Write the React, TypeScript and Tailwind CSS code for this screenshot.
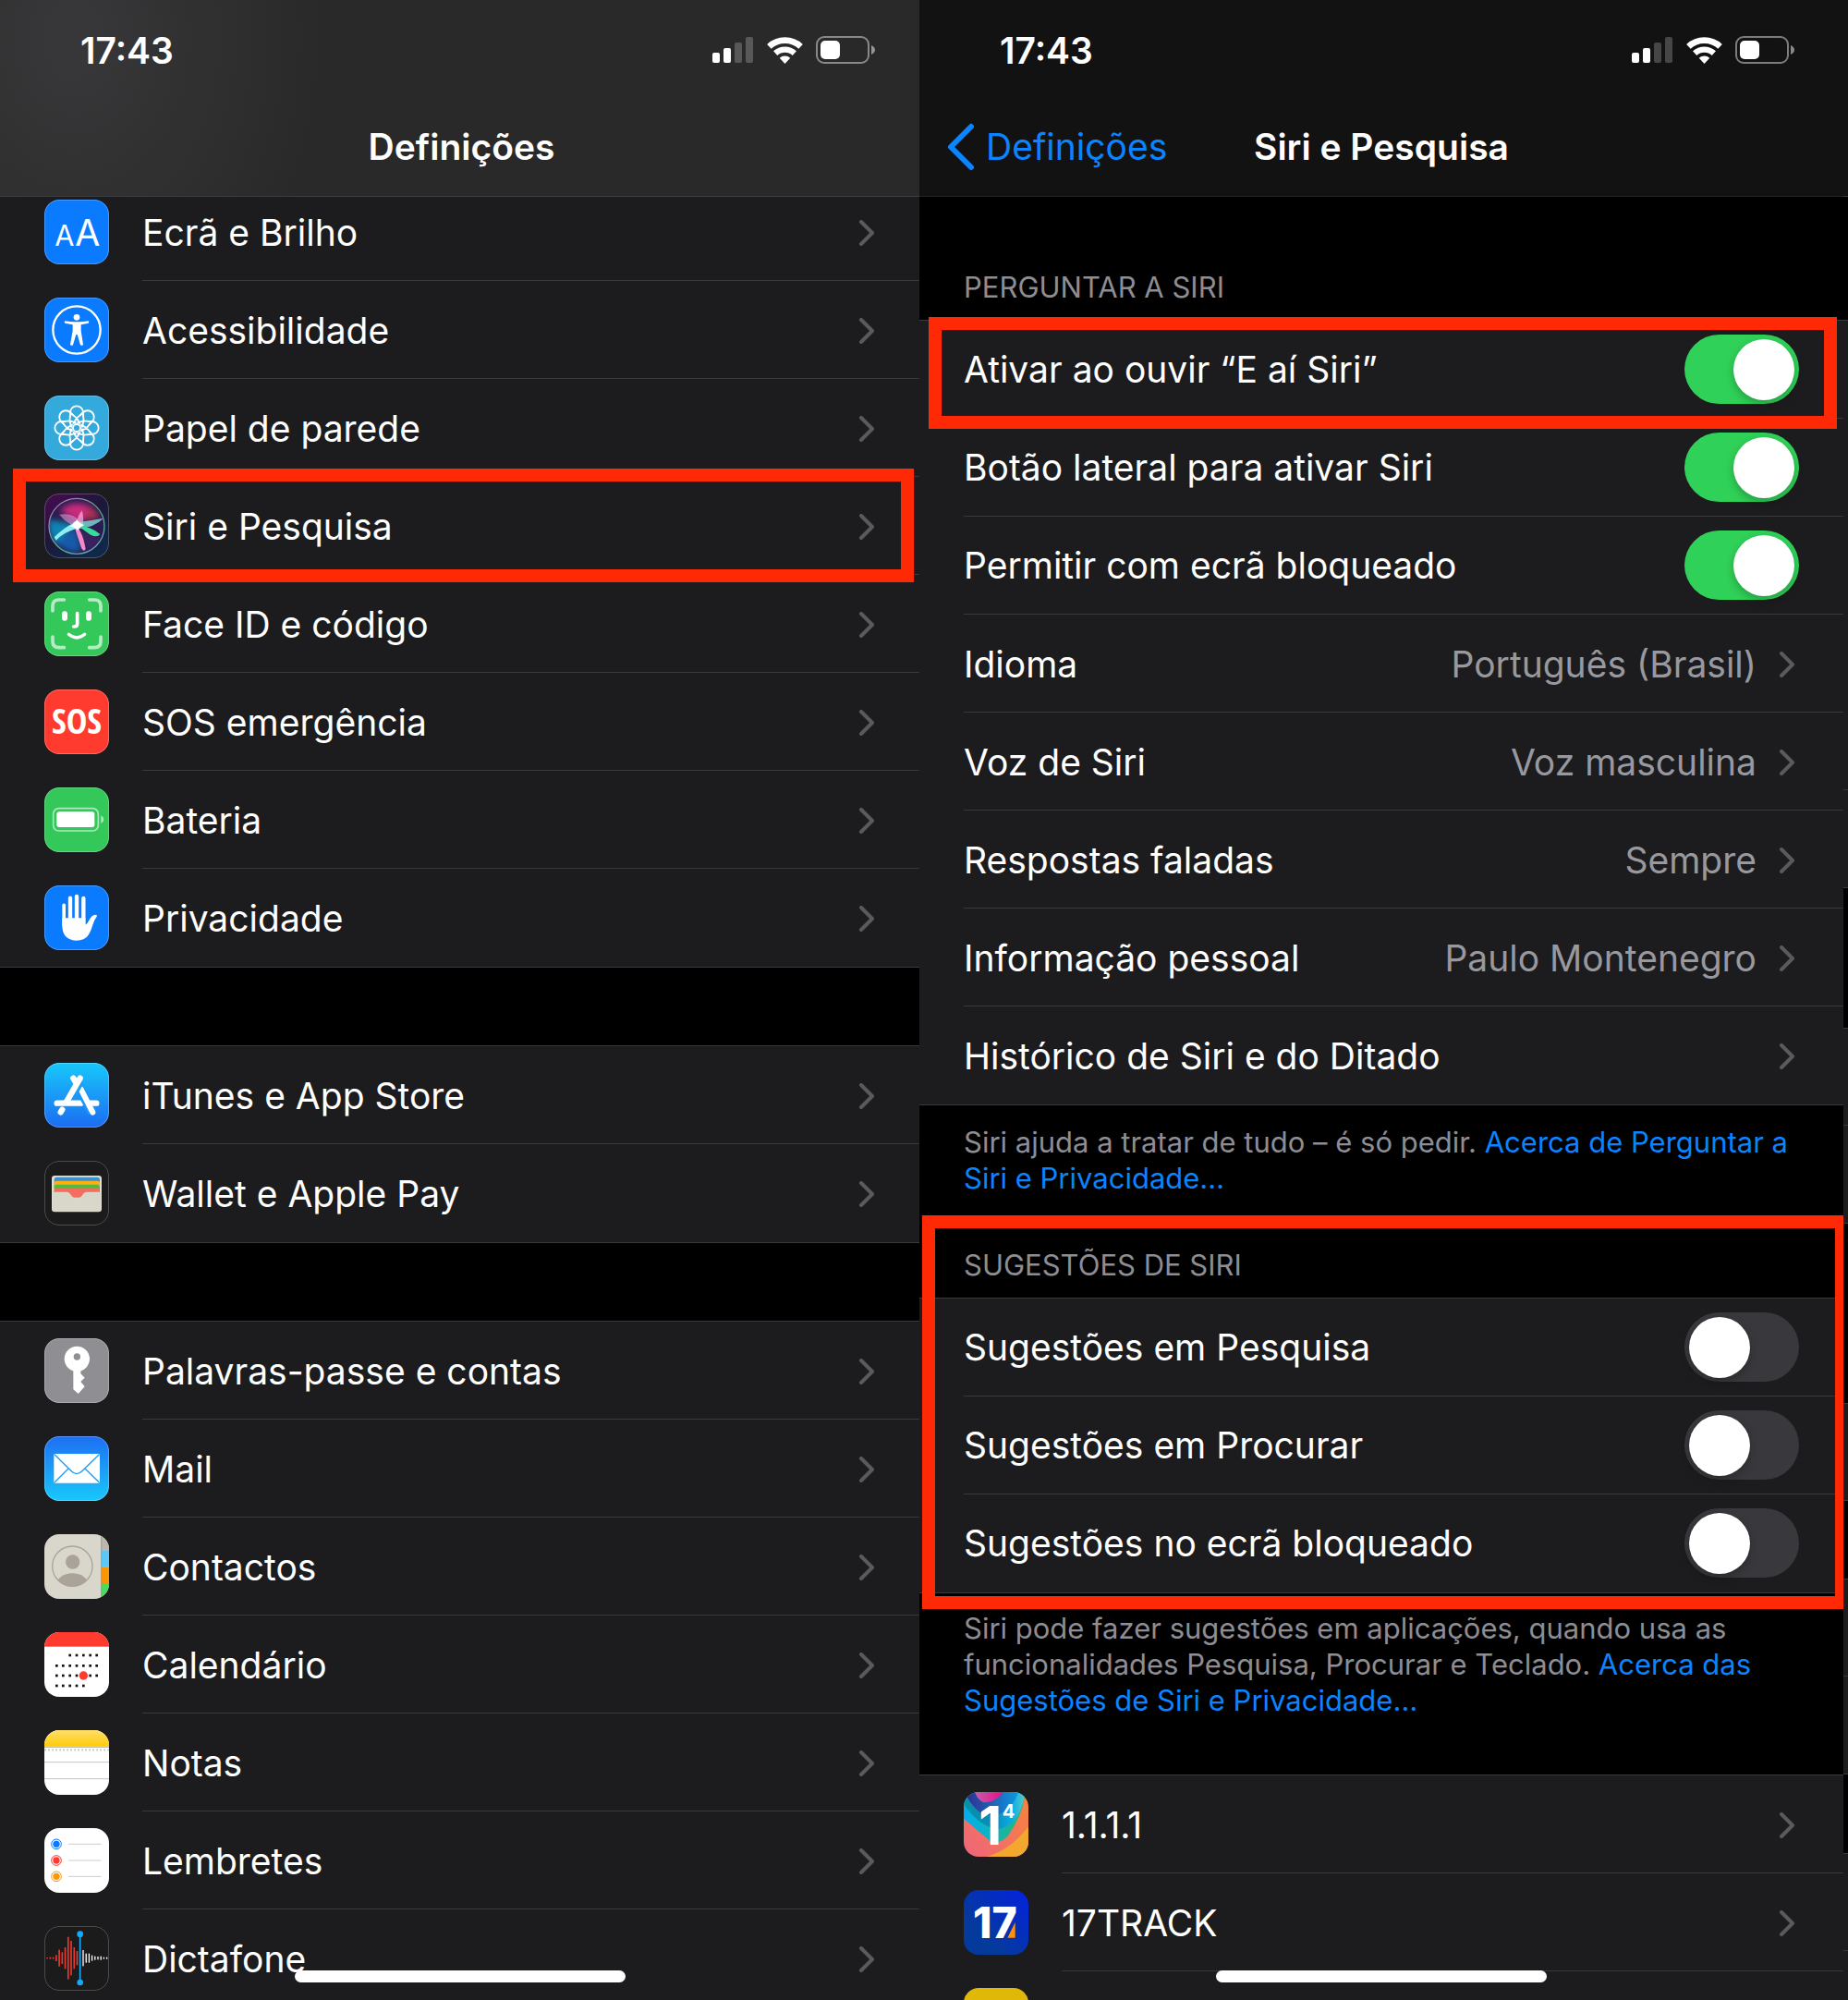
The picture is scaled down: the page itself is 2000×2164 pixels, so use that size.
import type { ReactNode } from "react";
import { useState } from "react";

type LinkItem = { label: string; icon?: ReactNode; value?: string; marked?: boolean }

const inter = { fontFamily: "Inter, sans-serif" }

/* ---------- app icons, drawn on a 210 x 210 grid ---------- */

const Tile = ({ bg, edge = 0.3, children }: { bg: string; edge?: number; children?: ReactNode }) => (
    <svg viewBox="0 0 210 210" className="size-[70px] shrink-0 overflow-hidden rounded-[16px]" aria-hidden="true">
        <rect width="210" height="210" fill={bg} />
        {children}
        <rect x="1" y="1" width="208" height="208" rx="47" fill="none" stroke="#fff" strokeOpacity={edge} strokeWidth="3" />
    </svg>
)

const DisplayIcon = () => (
    <Tile bg="#0a7aff">
        <text x="34" y="149" fontSize="92" fontWeight="400" fill="#fff" style={inter}>A</text>
        <text x="99" y="149" fontSize="119" fontWeight="400" fill="#fff" style={inter}>A</text>
    </Tile>
)

const AccessibilityIcon = () => (
    <Tile bg="#0a7aff">
        <circle cx="105" cy="105" r="77" fill="none" stroke="#fff" strokeWidth="7" />
        <circle cx="105" cy="64" r="10" fill="#fff" />
        <path d="M67 76 Q86 79 96 79 H114 Q124 79 143 76 Q147 79 143 83 L119 88 V108 L126 152 Q123 158 117 154 L107 120 H103 L93 154 Q87 158 84 152 L92 108 V88 L67 83 Q63 79 67 76 Z" fill="#fff" />
    </Tile>
)

const WallpaperIcon = () => (
    <Tile bg="#34aadc">
        <g fill="none" stroke="#fff" strokeWidth="5.5" strokeLinejoin="round">
            {[0, 45, 90, 135, 180, 225, 270, 315].map((a) => (
                <path key={a} transform={`rotate(${a} 105 105)`} d="M105 73 L94 92 M105 73 L116 92 M105 73 L84 55 A21 21 0 1 1 126 55 L105 73 M84 55 V70 M126 55 V70" />
            ))}
            <circle cx="105" cy="105" r="12" />
        </g>
    </Tile>
)

const SiriIcon = () => (
    <Tile bg="url(#siriBg)" edge={0.25}>
        <defs>
            <linearGradient id="siriBg" x1="0" y1="0" x2="0.7" y2="1">
                <stop offset="0" stopColor="#4b0a55" />
                <stop offset="0.5" stopColor="#1d1738" />
                <stop offset="1" stopColor="#10294a" />
            </linearGradient>
            <linearGradient id="siriRing" x1="0" y1="0" x2="1" y2="1">
                <stop offset="0" stopColor="#d88ad0" />
                <stop offset="0.6" stopColor="#5fd39a" />
                <stop offset="1" stopColor="#8fb8e8" />
            </linearGradient>
            <clipPath id="siriClip"><circle cx="105" cy="106" r="88" /></clipPath>
            <filter id="siriSoft"><feGaussianBlur stdDeviation="9" /></filter>
            <filter id="siriGlow"><feGaussianBlur stdDeviation="2" /></filter>
        </defs>
        <g clipPath="url(#siriClip)">
            <rect width="210" height="210" fill="#2a1c52" />
            <g filter="url(#siriSoft)">
                <path d="M50 55 Q90 18 145 40 Q175 65 172 82 L105 90 Z" fill="#c92a7c" />
                <path d="M120 88 L176 82 Q180 60 150 42 Z" fill="#a8304f" />
                <path d="M15 85 L100 100 L40 165 Q10 140 15 85 Z" fill="#0a86b5" />
                <path d="M40 160 L105 110 L118 185 Q80 200 40 160 Z" fill="#135cab" />
                <path d="M115 115 L190 145 Q170 190 135 190 Z" fill="#3b235f" />
            </g>
            <g filter="url(#siriGlow)">
                <path d="M48 68 Q105 58 130 112 Q80 108 48 68 Z" fill="#e7a3dc" fillOpacity="0.55" />
                <path d="M102 106 Q108 70 122 55 Q130 80 124 106 Z" fill="#f7a9dc" fillOpacity="0.75" />
                <path d="M32 142 Q62 112 98 94 Q112 108 104 114 Q62 126 38 152 Z" fill="#8feef2" />
                <path d="M104 94 Q150 88 192 80 Q162 110 112 114 Z" fill="#7fe9dc" fillOpacity="0.75" />
                <path d="M108 104 Q152 106 181 132 Q172 144 150 134 Z" fill="#35dc9a" />
                <path d="M97 106 Q122 112 134 180 Q128 192 120 176 Z" fill="#f48ac4" />
                <path d="M84 106 Q100 98 105 84 Q111 98 130 102 Q114 108 110 120 Q100 110 84 106 Z" fill="#fff" />
                <circle cx="105" cy="102" r="12" fill="#fff" />
            </g>
        </g>
        <circle cx="105" cy="106" r="90" fill="none" stroke="url(#siriRing)" strokeWidth="4" strokeOpacity="0.8" />
    </Tile>
)

const FaceIdIcon = () => (
    <Tile bg="#34c759">
        <g fill="none" stroke="#fff" strokeLinecap="round">
            <path d="M27 63 V47 Q27 27 47 27 H64 M146 27 H163 Q183 27 183 47 V63 M183 147 V162 Q183 182 163 182 H146 M64 182 H47 Q27 182 27 162 V147" strokeWidth="11" strokeOpacity="0.65" />
            <path d="M107 71 V104 Q107 114 97 114 H95" strokeWidth="11" />
            <path d="M79 139 Q105 161 131 139" strokeWidth="10" />
        </g>
        <rect x="57" y="64" width="18" height="31" rx="9" fill="#fff" />
        <rect x="135" y="64" width="18" height="31" rx="9" fill="#fff" />
    </Tile>
)

const SosIcon = () => (
    <Tile bg="#ff3b30">
        <text x="105" y="144" textAnchor="middle" fontSize="114" fontWeight="700" fill="#fff" style={{ fontFamily: "'Liberation Sans Narrow', 'Open Sans Condensed', Roboto, sans-serif" }}>SOS</text>
    </Tile>
)

const BatteryIcon = () => (
    <Tile bg="#34c759">
        <rect x="29" y="68" width="146" height="73" rx="18" fill="none" stroke="#fff" strokeOpacity="0.6" strokeWidth="5" />
        <rect x="40" y="79" width="123" height="50" rx="8" fill="#fff" />
        <path d="M184 91 Q193 96 193 104 Q193 112 184 117 Z" fill="#fff" fillOpacity="0.6" />
    </Tile>
)

const HandIcon = () => (
    <Tile bg="#0a7aff">
        <g stroke="#fff" strokeWidth="13" strokeLinecap="round">
            <path d="M63.500 64 V130" strokeWidth="11" />
            <path d="M84 41 V130" />
            <path d="M105 36 V130" />
            <path d="M127 42 V130" />
        </g>
        <path d="M58 106 H133 V128 Q140 124 145 113 Q154 95 166 95 Q173 96 170 101 Q162 112 157 128 Q150 152 140 165 Q128 179 103 179 Q58 177 58 130 Z" fill="#fff" />
    </Tile>
)

const AppStoreIcon = () => (
    <Tile bg="url(#storeBg)">
        <defs>
            <linearGradient id="storeBg" x1="0" y1="0" x2="0" y2="1">
                <stop offset="0" stopColor="#18c8fb" />
                <stop offset="1" stopColor="#1c6cf2" />
            </linearGradient>
        </defs>
        <g stroke="#fff" strokeWidth="19" strokeLinecap="round">
            <path d="M41 131 H118" />
            <path d="M116 84 L156 161" stroke="#1c96f7" strokeWidth="31" strokeLinecap="butt" />
            <path d="M119 86 L157 161" strokeWidth="18" />
            <path d="M116 58 L98 90" stroke="#1c9ff8" strokeWidth="29" strokeLinecap="butt" />
            <path d="M94 50 L104 66" />
            <path d="M116 50 L71 128" />
            <path d="M150 131 H169" />
            <path d="M58 152 L53 160" />
        </g>
    </Tile>
)

const WalletIcon = () => (
    <Tile bg="#1b1b1b" edge={0.25}>
        <rect x="24" y="48" width="162" height="118" rx="10" fill="#e2dfd4" />
        <rect x="32" y="53" width="148" height="40" rx="8" fill="#3d93c9" />
        <rect x="32" y="65" width="148" height="40" rx="8" fill="#fbb016" />
        <rect x="32" y="77" width="148" height="40" rx="8" fill="#57b93b" />
        <rect x="32" y="89" width="148" height="30" rx="8" fill="#f36e5e" />
        <path d="M27 101 H74 Q82 102 87 112 Q94 122 105 122 Q116 122 123 112 Q128 102 136 101 H183 V155 Q183 163 175 163 H35 Q27 163 27 155 Z" fill="#d9d6ca" />
    </Tile>
)

const KeyIcon = () => (
    <Tile bg="#8e8e93">
        <path d="M94 98 H118 V115 L131 128 L118 141 L131 157 L110 180 L94 166 Z" fill="#fff" />
        <circle cx="106" cy="67" r="41" fill="#fff" />
        <circle cx="106" cy="60" r="11" fill="#8e8e93" />
    </Tile>
)

const MailIcon = () => (
    <Tile bg="url(#mailBg)">
        <defs>
            <linearGradient id="mailBg" x1="0" y1="0" x2="0" y2="1">
                <stop offset="0" stopColor="#1e6ff2" />
                <stop offset="1" stopColor="#19c8fb" />
            </linearGradient>
        </defs>
        <rect x="31" y="57" width="149" height="95" rx="4" fill="#fff" />
        <path d="M33 59 L86 112 Q105 132 124 112 L178 59 M33 150 L78 105 M178 150 L132 105" fill="none" stroke="#1e9bf8" strokeWidth="4" />
    </Tile>
)

const ContactsIcon = () => (
    <Tile bg="#d9d6cb" edge={0}>
        <rect x="184" width="26" height="52" fill="#b9b7ae" />
        <rect x="184" y="52" width="26" height="54" fill="#5ac8fa" />
        <rect x="184" y="106" width="26" height="53" fill="#ff9500" />
        <rect x="184" y="159" width="26" height="51" fill="#4cd964" />
        <path d="M185 0 V210" stroke="#8f8d85" strokeOpacity="0.6" strokeWidth="3" />
        <clipPath id="person"><circle cx="91" cy="104" r="65" /></clipPath>
        <circle cx="91" cy="104" r="65" fill="none" stroke="#aaa398" strokeWidth="4" />
        <circle cx="92" cy="90" r="23" fill="#aaa398" />
        <ellipse cx="91" cy="164" rx="52" ry="37" fill="#aaa398" clipPath="url(#person)" />
    </Tile>
)

const calendarCols = [40, 61, 83, 105, 127, 149, 170]
const calendarRows = [
    { y: 75, from: 2, to: 7 },
    { y: 109, from: 0, to: 7 },
    { y: 141, from: 0, to: 7 },
    { y: 174, from: 0, to: 5 },
]

const CalendarIcon = () => (
    <Tile bg="#fff" edge={0}>
        <rect width="210" height="47" fill="#ff3b30" />
        {calendarRows.map((row) => calendarCols.slice(row.from, row.to).map((x) => (
            <rect key={`${x}-${row.y}`} x={x - 4} y={row.y - 4} width="8" height="8" fill="#111" />
        )))}
        <circle cx="127" cy="141" r="14" fill="#ff3b30" />
    </Tile>
)

const NotesIcon = () => (
    <Tile bg="#fff" edge={0}>
        <defs>
            <linearGradient id="notesTop" x1="0" y1="0" x2="0" y2="1">
                <stop offset="0" stopColor="#ffdf6b" />
                <stop offset="1" stopColor="#fecb09" />
            </linearGradient>
        </defs>
        <rect width="210" height="53" fill="url(#notesTop)" />
        <path d="M0 55 H210" stroke="#bdb9ad" strokeWidth="4" />
        <path d="M1 64 H210" stroke="#bbb" strokeWidth="5" strokeDasharray="5 7" />
        <path d="M0 104 H210 M0 158 H210" stroke="#c4c4c6" strokeWidth="3" />
    </Tile>
)

const RemindersIcon = () => (
    <Tile bg="#fff" edge={0}>
        {[{ y: 52, c: "#0a7aff" }, { y: 105, c: "#ff3b30" }, { y: 157, c: "#ff9500" }].map(({ y, c }) => (
            <g key={y}>
                <circle cx="39" cy={y} r="16" fill="none" stroke={c} strokeWidth="3" />
                <circle cx="39" cy={y} r="11" fill={c} />
                <path d={`M78 ${y} H185`} stroke="#cdcdd0" strokeWidth="3" />
            </g>
        ))}
    </Tile>
)

const redBars = [2, 3, 3, 10, 27, 19, 35, 69, 56, 35, 23]
const whiteBars = [26, 15, 15, 9, 6, 5, 6, 3, 3]

const VoiceIcon = () => (
    <Tile bg="#1b1b1c" edge={0.25}>
        {redBars.map((h, i) => <rect key={i} x={7 + i * 9.7} y={104 - h} width="5" height={h * 2} fill="#e8392f" />)}
        {whiteBars.map((h, i) => <rect key={i} x={124 + i * 9.6} y={104 - h} width="4" height={h * 2} fill="#fff" />)}
        <path d="M116 26 V183" stroke="#18a8f8" strokeWidth="5" />
        <circle cx="116" cy="26" r="10" fill="#18a8f8" />
        <circle cx="116" cy="183" r="10" fill="#18a8f8" />
    </Tile>
)

const OneIcon = () => (
    <Tile bg="url(#oneBase)" edge={0}>
        <defs>
            <linearGradient id="oneBase" x1="0" y1="1" x2="1" y2="0">
                <stop offset="0" stopColor="#f0647c" />
                <stop offset="1" stopColor="#f6863a" />
            </linearGradient>
            <linearGradient id="oneGreen" x1="0" y1="0" x2="1" y2="0">
                <stop offset="0" stopColor="#00aeef" />
                <stop offset="0.45" stopColor="#10b4bb" />
                <stop offset="1" stopColor="#2bb673" />
            </linearGradient>
            <linearGradient id="oneBlue" x1="0" y1="0" x2="1" y2="0">
                <stop offset="0" stopColor="#0590a8" />
                <stop offset="0.5" stopColor="#0b8bb5" />
                <stop offset="0.8" stopColor="#06b0e8" />
                <stop offset="1" stopColor="#5cc4c4" />
            </linearGradient>
            <linearGradient id="oneNavy" x1="0" y1="0" x2="1" y2="0">
                <stop offset="0" stopColor="#33288a" />
                <stop offset="1" stopColor="#0c9ae0" />
            </linearGradient>
            <linearGradient id="onePink" x1="0" y1="0" x2="1" y2="0">
                <stop offset="0" stopColor="#c060a8" />
                <stop offset="1" stopColor="#ea0c8c" />
            </linearGradient>
        </defs>
        <path d="M0 0 H190 L198 16 Q190 75 145 140 Q115 175 82 156 L0 86 Z" fill="url(#oneGreen)" />
        <path d="M0 0 H185 L197 14 Q190 60 165 90 Q135 125 100 119 Q45 105 0 40 Z" fill="url(#oneBlue)" />
        <path d="M0 0 H178 Q160 50 125 68 Q90 80 60 72 Q30 50 12 18 Z" fill="url(#oneNavy)" />
        <path d="M36 0 Q48 34 72 34 Q105 32 128 0 Z" fill="url(#onePink)" />
        <path d="M74 210 Q150 190 210 112 V210 Z" fill="#f2a72e" />
        <text x="49" y="172" fontSize="174" fontWeight="700" fill="#fff" style={inter}>1</text>
        <text x="125" y="83" fontSize="60" fontWeight="700" fill="#fff" style={inter}>4</text>
    </Tile>
)

const TrackIcon = () => (
    <Tile bg="url(#trackBg)" edge={0}>
        <defs>
            <linearGradient id="trackBg" x1="0.3" y1="0.7" x2="1" y2="0">
                <stop offset="0" stopColor="#043a9c" />
                <stop offset="1" stopColor="#0422e0" />
            </linearGradient>
        </defs>
        <text x="30" y="155" fontSize="139" fontWeight="800" fill="#fff" style={inter}>17</text>
        <path d="M167 105 V155 H142 Z" fill="#ff9200" />
    </Tile>
)

/* ---------- status bar and navigation ---------- */

const StatusBar = ({ className }: { className: string }) => (
    <div className={`flex h-[108px] items-center justify-between pl-[87px] ${className}`}>
        <time className="text-[39px] leading-none font-semibold">17:43</time>
        <div className="flex items-center gap-[14px]">
            <svg viewBox="0 0 45 28" className="h-7 w-[45px]" aria-hidden="true">
                <rect y="17" width="8" height="11" rx="2" fill="#fff" />
                <rect x="12" y="12" width="8" height="16" rx="2" fill="#fff" />
                <rect x="24" y="6" width="8" height="22" rx="2" fill="#fff" fillOpacity="0.22" />
                <rect x="36" width="8" height="28" rx="2" fill="#fff" fillOpacity="0.22" />
            </svg>
            <svg viewBox="0 0 117 88" className="h-[29px] w-[39px]" aria-hidden="true">
                <g fill="none" stroke="#fff">
                    <path d="M6.700 31.400 A76 76 0 0 1 110.300 31.400" strokeWidth="20" />
                    <path d="M27.100 53.400 A46 46 0 0 1 89.900 53.400" strokeWidth="19" />
                </g>
                <path d="M58.500 88 L41 69 A26 26 0 0 1 76 69 Z" fill="#fff" />
            </svg>
            <svg viewBox="0 0 64 30" className="h-[30px] w-16" aria-hidden="true">
                <rect x="1" y="1" width="56" height="28" rx="8" fill="none" stroke="#fff" strokeOpacity="0.45" strokeWidth="2" />
                <rect x="5" y="5" width="21" height="20" rx="5" fill="#fff" />
                <path d="M60 10 Q64 12 64 15 Q64 18 60 20 Z" fill="#fff" fillOpacity="0.5" />
            </svg>
        </div>
    </div>
)

const Chevron = () => (
    <svg viewBox="0 0 18 28" className="h-7 w-[18px] shrink-0" fill="none" stroke="#5a5a5e" strokeWidth="4" strokeLinecap="round" strokeLinejoin="round" aria-hidden="true">
        <path d="M3 2 L15 14 L3 26" />
    </svg>
)

const HomeIndicator = () => (
    <div className="absolute bottom-[19px] left-1/2 z-20 h-[13px] w-[358px] -translate-x-1/2 rounded-full bg-white" />
)

/* ---------- list rows ---------- */

const MenuRow = ({ item }: { item: LinkItem }) => (
    <li className="group relative">
        <a href="#" className="flex h-[106px] pl-12">
            {item.icon && <span className="flex w-[106px] shrink-0 items-center">{item.icon}</span>}
            <span className="flex flex-1 items-center border-b border-[#39393b] pt-[2px] pr-12 group-last:border-transparent">
                <span className="flex-1">{item.label}</span>
                <Chevron />
            </span>
        </a>
        {item.marked && <span className="pointer-events-none absolute -top-[9px] right-[6px] -bottom-[8px] left-[14px] z-10 border-[14px] border-[#ff2a05]" />}
    </li>
)

const DetailRow = ({ item }: { item: LinkItem }) => (
    <li className="group">
        <a href="#" className="flex h-[106px] pl-12">
            {item.icon && <span className="flex w-[106px] shrink-0 items-center">{item.icon}</span>}
            <span className="flex flex-1 items-center border-b border-[#39393b] pt-[2px] pr-[52px] group-last:border-transparent">
                <span className="flex-1">{item.label}</span>
                {item.value && <span className="pr-6 text-[#98989f]">{item.value}</span>}
                <Chevron />
            </span>
        </a>
    </li>
)

const SwitchRow = ({ id, label, on, marked }: { id: string; label: string; on: boolean; marked?: boolean }) => {
    const [checked, setChecked] = useState(on)

    return (
        <li className="group relative h-[106px] pl-12">
            <div className="flex h-full items-center border-b border-[#39393b] pr-12 group-last:border-transparent">
                <label htmlFor={id} className="flex-1">{label}</label>
                <input
                    id={id}
                    type="checkbox"
                    role="switch"
                    checked={checked}
                    onChange={(e) => setChecked(e.target.checked)}
                    className="flex h-[75px] w-[124px] appearance-none items-center rounded-full bg-[#39393d] px-[5px] before:size-[66px] before:rounded-full before:bg-white before:shadow-[0_4px_10px_rgba(0,0,0,0.25)] checked:justify-end checked:bg-[#30d158]"
                />
            </div>
            {marked && <span className="pointer-events-none absolute -top-1 right-[7px] -bottom-[11px] left-[10px] z-10 border-[14px] border-[#ff2a05]" />}
        </li>
    )
}

const Group = ({ children }: { children: ReactNode }) => (
    <ul className="border-y border-[#39393b] bg-[#1c1c1e]">{children}</ul>
)

const menuGroups: LinkItem[][] = [
    [
        { label: "Ecrã e Brilho", icon: <DisplayIcon /> },
        { label: "Acessibilidade", icon: <AccessibilityIcon /> },
        { label: "Papel de parede", icon: <WallpaperIcon /> },
        { label: "Siri e Pesquisa", icon: <SiriIcon />, marked: true },
        { label: "Face ID e código", icon: <FaceIdIcon /> },
        { label: "SOS emergência", icon: <SosIcon /> },
        { label: "Bateria", icon: <BatteryIcon /> },
        { label: "Privacidade", icon: <HandIcon /> },
    ],
    [
        { label: "iTunes e App Store", icon: <AppStoreIcon /> },
        { label: "Wallet e Apple Pay", icon: <WalletIcon /> },
    ],
    [
        { label: "Palavras-passe e contas", icon: <KeyIcon /> },
        { label: "Mail", icon: <MailIcon /> },
        { label: "Contactos", icon: <ContactsIcon /> },
        { label: "Calendário", icon: <CalendarIcon /> },
        { label: "Notas", icon: <NotesIcon /> },
        { label: "Lembretes", icon: <RemindersIcon /> },
        { label: "Dictafone", icon: <VoiceIcon /> },
    ],
]

const siriLinks: LinkItem[] = [
    { label: "Idioma", value: "Português (Brasil)" },
    { label: "Voz de Siri", value: "Voz masculina" },
    { label: "Respostas faladas", value: "Sempre" },
    { label: "Informação pessoal", value: "Paulo Montenegro" },
    { label: "Histórico de Siri e do Ditado" },
]

const SettingsScreen = () => (
    <section className="relative flex h-screen flex-col overflow-hidden bg-black">
        <header className="relative z-10 h-[213px] shrink-0 border-b border-[#3d3d3f] bg-[#292929] bg-[radial-gradient(28%_170%_at_8%_20%,#38383a_0%,#303031_50%,#292929_100%)]">
            <StatusBar className="pr-12" />
            <h1 className="pt-[26px] pl-1 text-center leading-[50px] font-semibold">Definições</h1>
        </header>
        <div className="-mt-[16px] flex flex-col gap-[84px]">
            {menuGroups.map((group, i) => (
                <Group key={i}>
                    {group.map((item) => <MenuRow key={item.label} item={item} />)}
                </Group>
            ))}
        </div>
        <HomeIndicator />
    </section>
)

const SiriScreen = () => (
    <section className="relative h-screen min-w-0 flex-1 overflow-hidden bg-black">
        <header className="relative h-[213px] border-b border-[#242426] bg-[#121212]">
            <StatusBar className="pr-[53px]" />
            <a href="#" className="absolute top-[133px] left-[30px] flex items-center gap-3 leading-[50px] text-[#0a84ff]">
                <svg viewBox="0 0 30 52" className="h-[52px] w-[30px]" fill="none" stroke="currentColor" strokeWidth="6" strokeLinecap="round" strokeLinejoin="round" aria-hidden="true">
                    <path d="M26 4 L4 26 L26 48" />
                </svg>
                Definições
            </a>
            <h1 className="pt-[26px] text-center leading-[50px] font-semibold">Siri e Pesquisa</h1>
        </header>

        <h2 className="flex h-[133px] items-end px-12 pb-4 text-[31px] leading-[39px] text-[#8d8d93]">PERGUNTAR A SIRI</h2>
        <Group>
            <SwitchRow id="hey" label="Ativar ao ouvir “E aí Siri”" on marked />
            <SwitchRow id="side" label="Botão lateral para ativar Siri" on />
            <SwitchRow id="locked" label="Permitir com ecrã bloqueado" on />
            {siriLinks.map((item) => <DetailRow key={item.label} item={item} />)}
        </Group>
        <p className="h-[118px] px-12 pt-5 text-[31px] leading-[39px] text-[#8d8d93]">
            Siri ajuda a tratar de tudo – é só pedir. <a href="#" className="text-[#0a84ff]">Acerca de Perguntar a<br />Siri e Privacidade…</a>
        </p>

        <div className="relative">
            <h2 className="flex h-[90px] items-end px-12 pb-4 text-[31px] leading-[39px] text-[#8d8d93]">SUGESTÕES DE SIRI</h2>
            <Group>
                <SwitchRow id="search" label="Sugestões em Pesquisa" on={false} />
                <SwitchRow id="lookup" label="Sugestões em Procurar" on={false} />
                <SwitchRow id="lock" label="Sugestões no ecrã bloqueado" on={false} />
            </Group>
            <span className="pointer-events-none absolute top-px right-0 -bottom-[17px] left-[3px] z-10 border-[14px] border-r-[9px] border-[#ff2a05]" />
        </div>
        <p className="h-[196px] px-12 pt-[18px] text-[31px] leading-[39px] text-[#8d8d93]">
            Siri pode fazer sugestões em aplicações, quando usa as<br />
            funcionalidades Pesquisa, Procurar e Teclado. <a href="#" className="text-[#0a84ff]">Acerca das<br />Sugestões de Siri e Privacidade…</a>
        </p>

        <Group>
            <DetailRow item={{ label: "1.1.1.1", icon: <OneIcon /> }} />
            <DetailRow item={{ label: "17TRACK", icon: <TrackIcon /> }} />
            <DetailRow item={{ label: "", icon: <Tile bg="#e0b908" edge={0} /> }} />
        </Group>
        <HomeIndicator />
    </section>
)

/* thin slice of the next screen along the right edge */
const NextScreenEdge = () => (
    <div className="flex h-screen w-[5px] shrink-0 flex-col overflow-hidden bg-black *:shrink-0 *:border-[#39393b]" aria-hidden="true">
        <div className="h-[213px] border-b bg-[#121212]" />
        <div className="mt-[133px] h-[509px] border-y bg-[#1c1c1e]" />
        <div className="h-[106px] border-b bg-[#1c1c1e]" />
        <div className="mt-[151px] h-[106px] border-y bg-[#1c1c1e]" />
        <div className="h-[106px] border-b bg-[#1c1c1e]" />
        <div className="mt-[194px] h-[106px] border-y bg-[#1c1c1e]" />
        <div className="mt-[84px] h-[106px] border-y bg-[#1c1c1e]" />
        <div className="h-[106px] border-b bg-[#1c1c1e]" />
        <div className="mt-[85px] h-[106px] border-y bg-[#1c1c1e]" />
        <div className="h-[106px] bg-[#1c1c1e]" />
    </div>
)

const App = () => (
    <main className="grid h-screen grid-cols-[995fr_1005fr] overflow-hidden bg-black font-[Inter,sans-serif] text-[39px] leading-[50px] text-white">
        <SettingsScreen />
        <div className="flex min-w-0">
            <SiriScreen />
            <NextScreenEdge />
        </div>
    </main>
)

export default App;
